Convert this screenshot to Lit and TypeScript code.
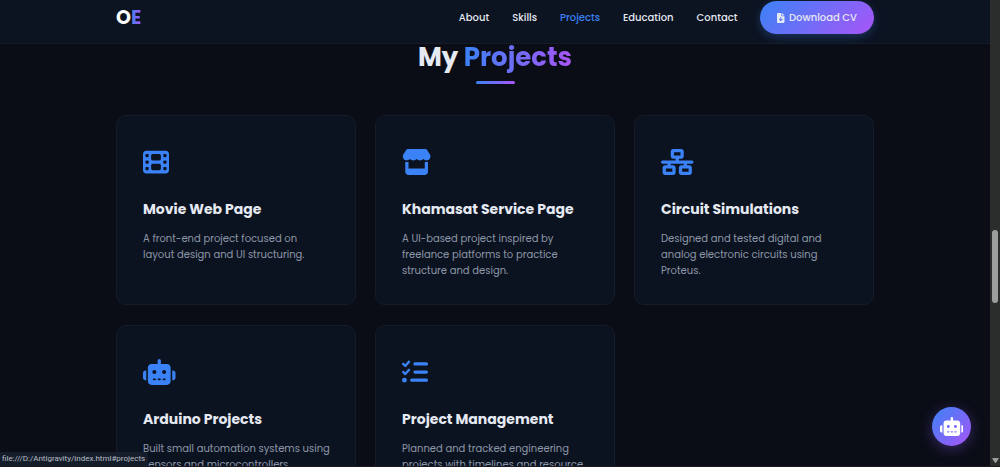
import { LitElement, html, css, svg } from "lit";
import { customElement, property } from "lit/decorators.js";

type Glyph = { w: number; d: string };

const glyphs: Record<string, Glyph> = {
  film: {
    w: 512,
    d: "M0 96C0 60.7 28.7 32 64 32H448c35.3 0 64 28.7 64 64V416c0 35.3-28.7 64-64 64H64c-35.3 0-64-28.7-64-64V96zM48 368v32c0 8.8 7.2 16 16 16H96c8.8 0 16-7.2 16-16V368c0-8.8-7.2-16-16-16H64c-8.8 0-16 7.2-16 16zm368-16c-8.8 0-16 7.2-16 16v32c0 8.8 7.2 16 16 16h32c8.8 0 16-7.2 16-16V368c0-8.8-7.2-16-16-16H416zM48 240v32c0 8.8 7.2 16 16 16H96c8.8 0 16-7.2 16-16V240c0-8.8-7.2-16-16-16H64c-8.8 0-16 7.2-16 16zm368-16c-8.8 0-16 7.2-16 16v32c0 8.8 7.2 16 16 16h32c8.8 0 16-7.2 16-16V240c0-8.8-7.2-16-16-16H416zM48 112v32c0 8.8 7.2 16 16 16H96c8.8 0 16-7.2 16-16V112c0-8.8-7.2-16-16-16H64c-8.8 0-16 7.2-16 16zM416 96c-8.8 0-16 7.2-16 16v32c0 8.8 7.2 16 16 16h32c8.8 0 16-7.2 16-16V112c0-8.8-7.2-16-16-16H416zM160 128v64c0 17.7 14.3 32 32 32H320c17.7 0 32-14.3 32-32V128c0-17.7-14.3-32-32-32H192c-17.7 0-32 14.3-32 32zm32 160c-17.7 0-32 14.3-32 32v64c0 17.7 14.3 32 32 32H320c17.7 0 32-14.3 32-32V320c0-17.7-14.3-32-32-32H192z",
  },
  store: {
    w: 576,
    d: "M547.6 103.8L490.3 13.1C485.2 5 476.1 0 466.4 0H109.6C99.9 0 90.8 5 85.7 13.1L28.3 103.8c-29.6 46.8-3.4 111.9 51.9 119.4c4 .5 8.1 .8 12.1 .8c26.1 0 49.3-11.4 65.2-29c15.9 17.6 39.1 29 65.2 29c26.1 0 49.3-11.4 65.2-29c15.9 17.6 39.1 29 65.2 29c26.2 0 49.3-11.4 65.2-29c16 17.6 39.1 29 65.2 29c4.1 0 8.1-.3 12.1-.8c55.5-7.4 81.8-72.5 52.1-119.4zM499.7 254.9l-.1 0c-5.3 .7-10.7 1.1-16.2 1.1c-12.4 0-24.3-1.9-35.4-5.3V384H128V250.6c-11.2 3.5-23.2 5.4-35.6 5.4c-5.5 0-11-.4-16.3-1.1l-.1 0c-4.1-.6-8.1-1.3-12-2.3V384v64c0 35.3 28.7 64 64 64H448c35.3 0 64-28.7 64-64V384 252.6c-4 1-8 1.8-12.3 2.3z",
  },
  network: {
    w: 640,
    d: "M256 64H384v64H256V64zM240 0c-26.5 0-48 21.5-48 48v96c0 26.5 21.5 48 48 48h48v32H32c-17.7 0-32 14.3-32 32s14.3 32 32 32h96v32H80c-26.5 0-48 21.5-48 48v96c0 26.5 21.5 48 48 48H240c26.5 0 48-21.5 48-48V368c0-26.5-21.5-48-48-48H192V288H448v32H400c-26.5 0-48 21.5-48 48v96c0 26.5 21.5 48 48 48H560c26.5 0 48-21.5 48-48V368c0-26.5-21.5-48-48-48H512V288h96c17.7 0 32-14.3 32-32s-14.3-32-32-32H352V192h48c26.5 0 48-21.5 48-48V48c0-26.5-21.5-48-48-48H240zM96 448V384H224v64H96zm320-64H544v64H416V384z",
  },
  robot: {
    w: 640,
    d: "M320 0c17.7 0 32 14.3 32 32V96H472c39.8 0 72 32.2 72 72V440c0 39.8-32.2 72-72 72H168c-39.8 0-72-32.2-72-72V168c0-39.8 32.2-72 72-72H288V32c0-17.7 14.3-32 32-32zM208 384c-8.8 0-16 7.2-16 16s7.2 16 16 16h32c8.8 0 16-7.2 16-16s-7.2-16-16-16H208zm96 0c-8.8 0-16 7.2-16 16s7.2 16 16 16h32c8.8 0 16-7.2 16-16s-7.2-16-16-16H304zm96 0c-8.8 0-16 7.2-16 16s7.2 16 16 16h32c8.8 0 16-7.2 16-16s-7.2-16-16-16H400zM264 256a40 40 0 1 0 -80 0 40 40 0 1 0 80 0zm152 40a40 40 0 1 0 0-80 40 40 0 1 0 0 80zM48 224H64V416H48c-26.5 0-48-21.5-48-48V272c0-26.5 21.5-48 48-48zm544 0c26.5 0 48 21.5 48 48v96c0 26.5-21.5 48-48 48H576V224h16z",
  },
  checklist: {
    w: 512,
    d: "M152.1 38.2c9.9 8.9 10.7 24 1.8 33.9l-72 80c-4.4 4.9-10.6 7.8-17.2 7.9s-12.9-2.4-17.6-7L7 113C-2.3 103.6-2.3 88.4 7 79s24.6-9.4 33.9 0l22.1 22.1 55.1-61.2c8.9-9.9 24-10.7 33.9-1.8zm0 160c9.9 8.9 10.7 24 1.8 33.9l-72 80c-4.4 4.9-10.6 7.8-17.2 7.9s-12.9-2.4-17.6-7L7 273c-9.4-9.4-9.4-24.6 0-33.9s24.6-9.4 33.9 0l22.1 22.1 55.1-61.2c8.9-9.9 24-10.7 33.9-1.8zM224 96c0-17.7 14.3-32 32-32H480c17.7 0 32 14.3 32 32s-14.3 32-32 32H256c-17.7 0-32-14.3-32-32zm0 160c0-17.7 14.3-32 32-32H480c17.7 0 32 14.3 32 32s-14.3 32-32 32H256c-17.7 0-32-14.3-32-32zM160 416c0-17.7 14.3-32 32-32H480c17.7 0 32 14.3 32 32s-14.3 32-32 32H192c-17.7 0-32-14.3-32-32zM48 368a48 48 0 1 1 0 96 48 48 0 1 1 0-96z",
  },
  file: {
    w: 384,
    d: "M64 0C28.7 0 0 28.7 0 64V448c0 35.3 28.7 64 64 64H320c35.3 0 64-28.7 64-64V160H256c-17.7 0-32-14.3-32-32V0H64zM256 0V128H384L256 0zM216 232V334.1l31-31c9.4-9.4 24.6-9.4 33.9 0s9.4 24.6 0 33.9l-72 72c-9.4 9.4-24.6 9.4-33.9 0l-72-72c-9.4-9.4-9.4-24.6 0-33.9s24.6-9.4 33.9 0l31 31V232c0-13.3 10.7-24 24-24s24 10.7 24 24z",
  },
};

const icon = (name: string) => {
  const g = glyphs[name];
  return html`<svg class="icon" viewBox="0 0 ${g.w} 512" aria-hidden="true">${svg`<path d=${g.d}></path>`}</svg>`;
};

const links = ["About", "Skills", "Projects", "Education", "Contact"];

const projects = [
  { icon: "film", title: "Movie Web Page", text: "A front-end project focused on layout design and UI structuring." },
  { icon: "store", title: "Khamasat Service Page", text: "A UI-based project inspired by freelance platforms to practice structure and design." },
  { icon: "network", title: "Circuit Simulations", text: "Designed and tested digital and analog electronic circuits using Proteus." },
  { icon: "robot", title: "Arduino Projects", text: "Built small automation systems using sensors and microcontrollers." },
  { icon: "checklist", title: "Project Management", text: "Planned and tracked engineering projects with timelines and resource planning." },
];

@customElement("project-card")
class ProjectCard extends LitElement {
  @property() icon = "";
  @property() heading = "";
  @property() text = "";

  static styles = css`
    :host {
      display: block;
      box-sizing: border-box;
      min-height: 190px;
      padding: 26px 24px 25px 26px;
      border: 1px solid #151c29;
      border-radius: 10px;
      background: #0c1320;
    }
    .slot {
      display: flex;
      align-items: center;
      height: 39px;
      margin-bottom: 17px;
    }
    .icon {
      height: 26px;
      fill: #3b82f6;
    }
    .title {
      margin: 0 0 11px;
      font-size: 14px;
      line-height: 22px;
      font-weight: 700;
      color: #e5e9f2;
      white-space: nowrap;
    }
    .text {
      margin: 0;
      font-size: 10px;
      line-height: 16px;
      color: #8c97a9;
    }
  `;

  render() {
    return html`
      <div class="slot">${icon(this.icon)}</div>
      <h3 class="title">${this.heading}</h3>
      <p class="text">${this.text}</p>
    `;
  }
}

@customElement("app-root")
class AppRoot extends LitElement {
  static styles = css`
    :host {
      position: relative;
      box-sizing: border-box;
      display: grid;
      grid-template-columns: minmax(0, 1fr) 10px;
      height: 100vh;
      overflow: hidden;
      border-bottom: 1px solid #1e1922;
      background: #0a0d16;
      color: #e5e9f2;
      font-family: Poppins, Inter, sans-serif;
    }
    .page {
      display: flex;
      flex-direction: column;
      min-height: 0;
      overflow: hidden;
    }
    .header {
      flex: none;
      padding: 1px 20px 9px;
      border-bottom: 1px solid #151b27;
      background: #0c1321;
    }
    .bar,
    .wrap {
      max-width: 758px;
      margin: 0 auto;
    }
    .bar {
      display: flex;
      align-items: center;
      justify-content: space-between;
    }
    .logo {
      font-size: 19px;
      line-height: 33px;
      font-weight: 700;
      color: #ffffff;
      text-decoration: none;
    }
    .grad {
      background: linear-gradient(90deg, #3b82f6, #a855f7);
      -webkit-background-clip: text;
      background-clip: text;
      color: transparent;
    }
    .nav {
      display: flex;
      align-items: center;
      gap: 23px;
    }
    .link {
      font-size: 10px;
      line-height: 17px;
      font-weight: 500;
      color: #e5e9f2;
      text-decoration: none;
    }
    .link.active {
      color: #3b82f6;
    }
    .cv {
      display: flex;
      align-items: center;
      gap: 4px;
      height: 33px;
      padding: 0 17px;
      border: 0;
      border-radius: 17px;
      background: linear-gradient(135deg, #3b82f6, #a855f7);
      box-shadow: 0 3px 10px rgba(59, 130, 246, 0.3);
      font: 500 10px/17px Poppins, Inter, sans-serif;
      color: #e5e9f2;
    }
    .cv .icon {
      height: 10px;
      fill: currentColor;
    }
    .main {
      flex: 1;
      min-height: 0;
      overflow: hidden;
      padding: 0 20px;
    }
    .heading {
      display: flex;
      flex-direction: column;
      align-items: center;
      gap: 10px;
      margin: 0 0 31px;
      font-size: 26px;
      line-height: 27px;
      font-weight: 700;
    }
    .rule {
      width: 39px;
      height: 3px;
      border-radius: 2px;
      background: linear-gradient(90deg, #3b82f6, #a855f7);
    }
    .cards {
      display: grid;
      grid-template-columns: repeat(auto-fill, minmax(200px, 1fr));
      gap: 20px 19px;
    }
    .scroll {
      display: flex;
      justify-content: center;
      position: relative;
      background: #2b2c2c;
    }
    .thumb {
      width: 6px;
      height: 73px;
      margin-top: 230px;
      border-radius: 3px;
      background: #9c9d9d;
    }
    .arrow {
      position: absolute;
      bottom: 3px;
      left: 2px;
      width: 7px;
      height: 5px;
      fill: #9c9d9d;
    }
    .chat {
      position: absolute;
      right: 29px;
      bottom: 20px;
      display: flex;
      align-items: center;
      justify-content: center;
      width: 39px;
      height: 39px;
      padding: 0;
      border: 0;
      border-radius: 50%;
      background: linear-gradient(135deg, #3b82f6, #a855f7);
      box-shadow: 0 3px 14px rgba(139, 92, 246, 0.35);
    }
    .chat .icon {
      height: 19px;
      fill: #ffffff;
    }
    .status {
      position: absolute;
      left: 0;
      bottom: 0;
      padding: 0 3px 0 2px;
      border-radius: 0 3px 0 0;
      background: #151d2a;
      font: 8px/14px Roboto, sans-serif;
      color: #b9bec7;
    }
  `;

  render() {
    return html`
      <div class="page">
        <header class="header">
          <div class="bar">
            <a class="logo" href="#home">O<span class="grad">E</span></a>
            <nav class="nav">
              ${links.map(
                (l) => html`<a class="link ${l === "Projects" ? "active" : ""}" href="#${l.toLowerCase()}">${l}</a>`
              )}
              <button class="cv">${icon("file")}<span>Download CV</span></button>
            </nav>
          </div>
        </header>
        <main class="main">
          <section class="wrap">
            <h2 class="heading">
              <span>My <span class="grad">Projects</span></span>
              <span class="rule"></span>
            </h2>
            <div class="cards">
              ${projects.map(
                (p) => html`<project-card .icon=${p.icon} .heading=${p.title} .text=${p.text}></project-card>`
              )}
            </div>
          </section>
        </main>
      </div>
      <div class="scroll">
        <div class="thumb"></div>
        <svg class="arrow" viewBox="0 0 7 5"><path d="M1 0H6Q7.200 0 6.500 1L4.200 4.500Q3.500 5.300 2.800 4.500L.5 1Q-.2 0 1 0z"></path></svg>
      </div>
      <button class="chat" aria-label="Open chat">${icon("robot")}</button>
      <div class="status">file:///D:/Antigravity/index.html#projects</div>
    `;
  }
}
